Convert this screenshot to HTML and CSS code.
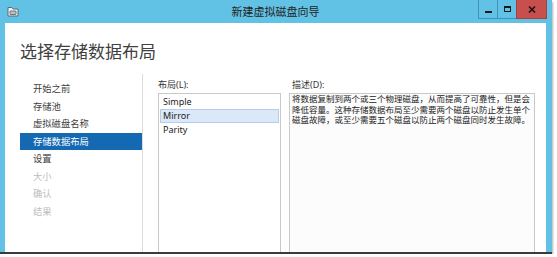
FILE: index.html
```html
<!DOCTYPE html>
<html lang="zh-CN">
<head>
   <meta charset="UTF-8">
   <meta name="viewport" content="width=device-width, initial-scale=1.0">
   <title>新建虚拟磁盘向导</title>
   <link rel="stylesheet" href="styles.css">
</head>
<body>
   <div class="window">
      <div class="titlebar">
         <div class="tb-left">
            <svg class="app-icon" width="12" height="11" viewBox="0 0 12 11">
               <path d="M1 1.5h4l1 1.5h5v7H1z" fill="#eef6fa" stroke="#5d6b73" stroke-width="1"/>
               <rect x="3" y="5" width="6" height="3.5" rx="0.5" fill="#b9c4ca" stroke="#4d5a61" stroke-width="0.8"/>
            </svg>
         </div>
         <div class="title">新建虚拟磁盘向导</div>
         <div class="controls">
            <div class="ctl ctl-min"><span></span></div>
            <div class="ctl ctl-max"><span></span></div>
            <div class="ctl ctl-close">
               <svg width="8" height="7" viewBox="0 0 8 7">
                  <path d="M1 0.5l6 6M7 0.5l-6 6" stroke="#2a1414" stroke-width="1.7"/>
               </svg>
            </div>
         </div>
      </div>

      <div class="client">
         <h1 class="heading">选择存储数据布局</h1>
         <div class="body">
            <ul class="steps">
               <li>开始之前</li>
               <li>存储池</li>
               <li>虚拟磁盘名称</li>
               <li class="current">存储数据布局</li>
               <li>设置</li>
               <li class="off">大小</li>
               <li class="off">确认</li>
               <li class="off">结果</li>
            </ul>

            <div class="pane layout-pane">
               <div class="label">布局(L):</div>
               <ul class="listbox">
                  <li>Simple</li>
                  <li class="sel">Mirror</li>
                  <li>Parity</li>
               </ul>
            </div>

            <div class="pane desc-pane">
               <div class="label">描述(D):</div>
               <div class="desc">将数据复制到两个或三个物理磁盘，从而提高了可靠性，但是会降低容量。这种存储数据布局至少需要两个磁盘以防止发生单个磁盘故障，或至少需要五个磁盘以防止两个磁盘同时发生故障。</div>
            </div>
         </div>
      </div>
   </div>
</body>
</html>
```

FILE: styles.css
```css
*{
   margin: 0;
   padding: 0;
   box-sizing: border-box;
}

body{
   background: #fff;
   font-family: "Noto Sans", "Noto Sans CJK SC", sans-serif;
   color: #333;
}

ul{
   list-style: none;
}

.window{
   width: 552px;
   height: 254px;
   background: #62c2e5;
   padding: 0 6px 0 5px;
   display: flex;
   flex-direction: column;
   border-bottom: 2px solid #3b3b3b;
   box-shadow: 1px 2px 2px rgba(0, 0, 0, 0.3);
}

/* title bar */
.titlebar{
   height: 23px;
   display: grid;
   grid-template-columns: 1fr auto 1fr;
}

.tb-left{
   padding: 6px 0 0 2px;
}

.app-icon{
   display: block;
}

.title{
   font-size: 11px;
   line-height: 24px;
   color: #222;
}

.controls{
   display: flex;
   justify-self: end;
   align-self: start;
   margin-right: -1px;
}

.ctl{
   height: 19px;
   width: 20px;
   display: flex;
   align-items: center;
   justify-content: center;
   border: 1px solid #3f93b6;
   border-top: none;
   margin-left: -1px;
}

.ctl-min span{
   width: 7px;
   height: 2px;
   background: #1a1a1a;
   margin-top: 5px;
}

.ctl-max span{
   width: 7px;
   height: 6px;
   border: 1px solid #1a1a1a;
   border-top-width: 2px;
}

.ctl-close{
   width: 31px;
   background: #c7504f;
   border-color: #a83f3e;
}

.ctl-close svg{
   display: block;
}

/* client area */
.client{
   flex: 1;
   background: #fff;
   padding: 0 11px 0 15px;
   display: flex;
   flex-direction: column;
   min-height: 0;
}

.heading{
   margin-top: 18px;
   font-size: 17px;
   line-height: 21px;
   font-weight: normal;
   color: #404040;
}

.body{
   flex: 1;
   display: flex;
   margin-top: 12px;
   min-height: 0;
}

.steps{
   width: 123px;
   padding-top: 6px;
   border-right: 1px solid #dcdcdc;
}

.steps li{
   height: 17.5px;
   line-height: 17.5px;
   padding-left: 13px;
   font-size: 9.3px;
   color: #404040;
}

.steps li.current{
   background: #1569b3;
   color: #fff;
}

.steps li.off{
   color: #bdbdbd;
}

.pane{
   display: flex;
   flex-direction: column;
   padding-top: 5px;
}

.label{
   font-size: 9px;
   line-height: 12px;
   color: #333;
   margin-bottom: 2px;
   padding-left: 0;
}

.layout-pane{
   width: 123px;
   margin-left: 15px;
}

.listbox{
   flex: 1;
   border: 1px solid #c9c9c9;
   border-bottom: none;
   padding: 1px;
}

.listbox li{
   height: 14px;
   line-height: 14px;
   padding-left: 3px;
   font-size: 9px;
   color: #222;
}

.listbox li.sel{
   background: #dae8f8;
   border: 1px solid #b3cdea;
   line-height: 12px;
   padding-left: 2px;
}

.desc-pane{
   flex: 1;
   margin-left: 8px;
}

.desc-pane .label{
   padding-left: 3px;
}

.desc{
   flex: 1;
   border: 1px solid #c9c9c9;
   border-bottom: none;
   background: #fcfcfc;
   padding: 0 2px;
   font-size: 8.5px;
   line-height: 10.5px;
   color: #222;
}
```
